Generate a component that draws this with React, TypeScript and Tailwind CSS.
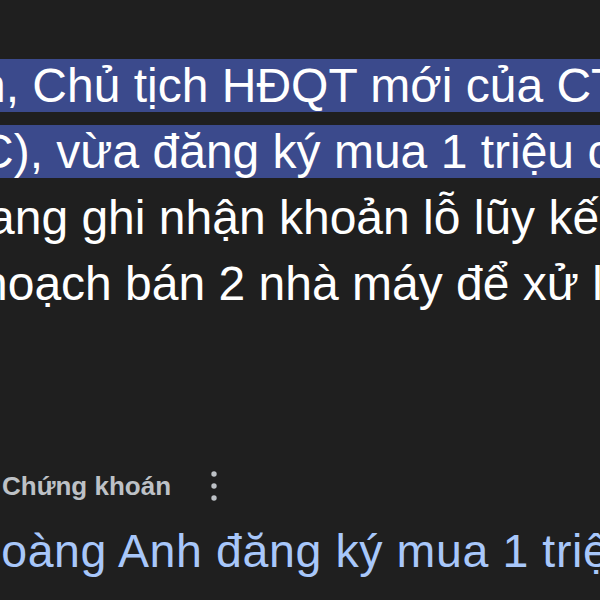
const font = { fontFamily: '"Liberation Sans", Arial, sans-serif' };

function KebabIcon() {
  return (
    <svg className="w-[8px] h-[32px] text-[#bdc1c6]" viewBox="0 0 8 32" fill="currentColor">
      <circle cx="4" cy="4" r="2.7" />
      <circle cx="4" cy="16" r="2.7" />
      <circle cx="4" cy="28" r="2.7" />
    </svg>
  );
}

export default function App() {
  return (
    <div className="w-[600px] h-[600px] bg-[#1f1f1f] overflow-hidden" style={font}>
      <div className="pt-[53px] text-[48px] leading-[66px] text-white whitespace-nowrap">
        <div className="-ml-[21px]">
          <span className="bg-[#3b4a8c]">n, Chủ tịch HĐQT mới của CTCP Hoàng</span>
        </div>
        <div className="-ml-[21px]">
          <span className="bg-[#3b4a8c]">C), vừa đăng ký mua 1 triệu cổ phiếu</span>
        </div>
        <div className="-ml-[12px]">ang ghi nhận khoản lỗ lũy kế lớn</div>
        <div className="-ml-[19px]">hoạch bán 2 nhà máy để xử lý nợ</div>
      </div>
      <div className="mt-[154px] flex items-center h-[30px] whitespace-nowrap">
        <span className="text-[26px] font-bold text-[#bdc1c6] pl-[2px]">Chứng khoán</span>
        <div className="ml-[39px]">
          <KebabIcon />
        </div>
      </div>
      <div className="mt-[22px] -ml-[33px] text-[46.5px] leading-[56px] tracking-[0.6px] text-[#a8c7fa] whitespace-nowrap">
        Hoàng Anh đăng ký mua 1 triệu cổ phiếu
      </div>
    </div>
  );
}
